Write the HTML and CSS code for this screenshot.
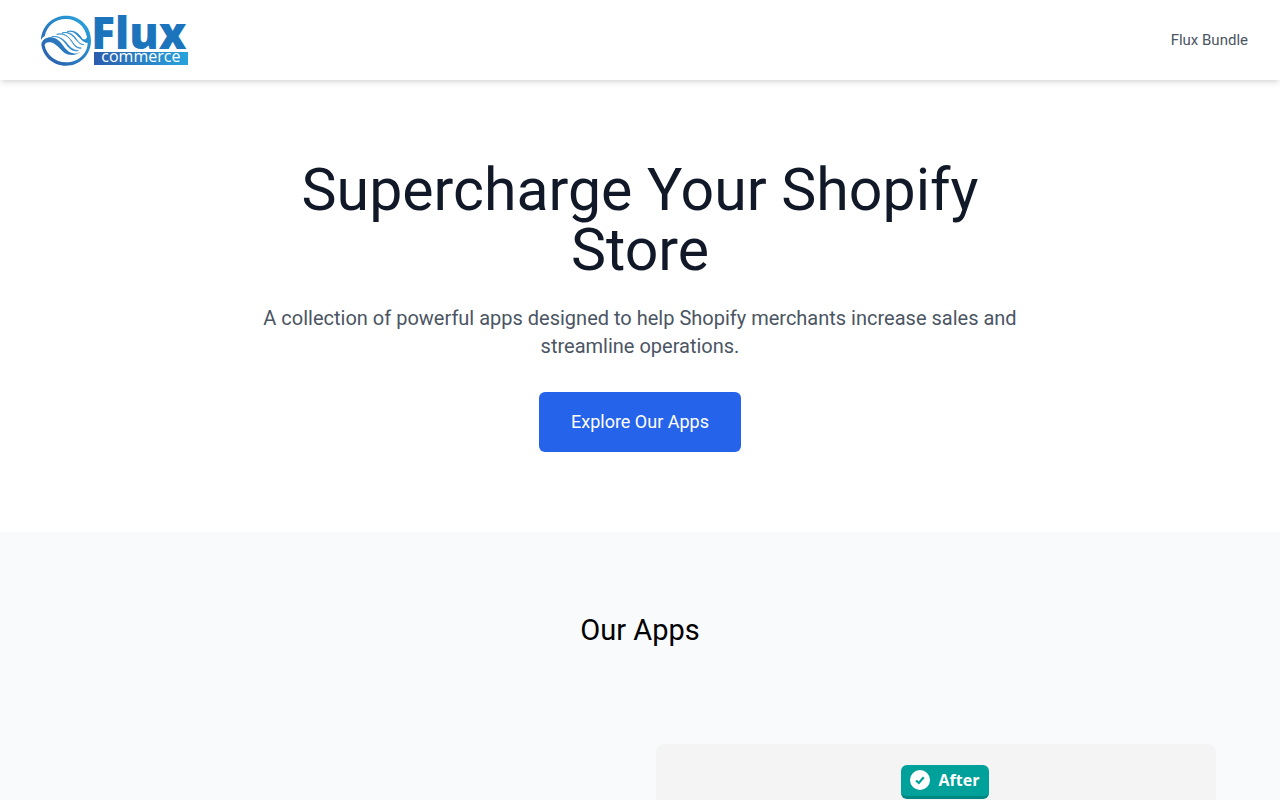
FILE: index.html
```
<!DOCTYPE html>
<html lang="en">

<head>
    <meta charset="UTF-8">
    <meta name="viewport" content="width=device-width, initial-scale=1">
    <title>Flux Commerce</title>
    <link rel="stylesheet" href="styles.css">
</head>

<body>
    <header class="header">
        <a href="#" class="logo" aria-label="Flux commerce">
            <svg width="150" height="70" viewBox="33 0 450 210">
                <defs>
                    <linearGradient id="ring" x1="0" y1="1" x2="1" y2="0">
                        <stop offset="0" stop-color="#2b58a8"/>
                        <stop offset="1" stop-color="#27aae1"/>
                    </linearGradient>
                    <linearGradient id="bar" x1="0" y1="0" x2="1" y2="0">
                        <stop offset="0" stop-color="#2b5cad"/>
                        <stop offset="1" stop-color="#27a3dd"/>
                    </linearGradient>
                </defs>
                <g fill="url(#ring)">
                    <path d="M33 106C34 64 67 32 108 32C151 32 183 64 183 107C183 149 150 182 108 182C67 182 36 151 34 116C41 96 62 92 80 102C94 110 101 128 115 139C126 147 139 148 151 140C136 154 116 151 103 143C87 130 76 114 62 112C51 110 45 114 44 121C49 149 75 172 108 172C146 172 173 144 173 113C168 115 158 109 151 99C163 106 169 104 171 96C165 64 140 42 108 42C74 42 51 63 44 94C38 97 35 101 33 106Z"/>
                </g>
                <g fill="#2485c9" stroke="#2485c9" stroke-width="2" stroke-linejoin="round">
                    <path d="M65 95C84 91 97 102 108 117C117 130 127 140 145 137C130 136 121 128 112 117C101 102 86 93 65 95Z"/>
                    <path d="M80 88C103 83 115 94 125 109C133 123 141 132 154 129C142 129 135 122 127 111C116 94 100 83 80 88Z"/>
                    <path d="M96 84C117 78 130 89 139 102C146 114 152 120 162 119C151 118 146 112 138 104C127 90 113 79 96 84Z"/>
                    <path d="M111 80C131 74 143 84 151 94C158 105 163 111 172 111C160 110 156 104 148 97C137 85 127 75 111 80Z"/>
                </g>
                <text x="184" y="133" class="logo-name">Flux</text>
                <rect x="192" y="141" width="282" height="39" fill="url(#bar)"/>
                <text x="214" y="171" class="logo-tag">commerce</text>
            </svg>
        </a>
        <nav>
            <a href="#apps" class="nav-link">Flux Bundle</a>
        </nav>
    </header>

    <main>
        <section class="hero">
            <h1>Supercharge Your Shopify Store</h1>
            <p>A collection of powerful apps designed to help Shopify merchants increase sales and streamline operations.</p>
            <a href="#apps" class="btn">Explore Our Apps</a>
        </section>

        <section class="apps" id="apps">
            <h2>Our Apps</h2>
            <div class="app-row">
                <div class="app-text"></div>
                <div class="app-shot">
                    <div class="badge">
                        <svg width="20" height="20" viewBox="0 0 20 20">
                            <circle cx="10" cy="10" r="10" fill="#fff"/>
                            <path d="M6 10.5L8.8 13L13.8 7.3" fill="none" stroke="#00a19a" stroke-width="2.2"/>
                        </svg>
                        <span>After</span>
                    </div>
                    <div class="panel"></div>
                </div>
            </div>
        </section>
    </main>
</body>

</html>
```
FILE: styles.css
```
* {
    box-sizing: border-box;
    margin: 0;
    padding: 0;
}

body {
    background: #fff;
    color: #000;
    font-family: Roboto, "Liberation Sans", sans-serif;
}

a {
    text-decoration: none;
}

.header {
    position: relative;
    display: flex;
    align-items: center;
    justify-content: space-between;
    height: 80px;
    padding: 0 32px;
    box-shadow: 0 4px 6px -1px rgba(0, 0, 0, 0.1), 0 2px 4px -2px rgba(0, 0, 0, 0.1);
}

.logo {
    margin-left: 9px;
}

.logo svg {
    display: block;
    overflow: visible;
}

.logo-name {
    fill: #1c75bc;
    font-family: "Open Sans", sans-serif;
    font-size: 132px;
    font-weight: 800;
}

.logo-tag {
    fill: #fff;
    font-family: "Open Sans", sans-serif;
    font-size: 48px;
}

.nav-link {
    color: #4b5563;
    font-size: 15px;
    line-height: 24px;
}

.hero {
    max-width: 832px;
    margin: 0 auto;
    padding: 80px 32px;
    text-align: center;
}

.hero h1 {
    color: #111827;
    font-size: 59px;
    font-weight: 400;
    line-height: 60px;
}

.hero p {
    margin: 24px 0 32px;
    color: #4b5563;
    font-size: 20px;
    line-height: 28px;
}

.btn {
    display: inline-block;
    padding: 16px 32px;
    border-radius: 6px;
    background: #2563eb;
    color: #fff;
    font-size: 18px;
    line-height: 28px;
    vertical-align: top;
}

.apps {
    padding: 80px 64px;
    background: #f9fafc;
}

.apps h2 {
    margin-bottom: 96px;
    font-size: 29px;
    font-weight: 400;
    line-height: 36px;
    text-align: center;
}

.app-row {
    display: grid;
    grid-template-columns: 1fr 1fr;
    gap: 32px;
}

.app-shot {
    display: flex;
    flex-direction: column;
    align-items: center;
    padding: 21px 24px 24px;
    border-radius: 8px;
    background: #f4f4f4;
}

.badge {
    display: flex;
    align-items: center;
    gap: 9px;
    height: 34px;
    margin-left: 18px;
    padding: 0 10px 2px 9px;
    border-bottom: 3px solid #008780;
    border-radius: 6px;
    background: #00a19a;
    color: #fff;
    font-family: "Open Sans", sans-serif;
    font-size: 16px;
    font-weight: 700;
}

.panel {
    width: 100%;
    height: 360px;
    margin-top: 8px;
    border-radius: 12px;
    background: #fff;
    box-shadow: 0 2px 8px rgba(0, 0, 0, 0.08);
}
```
